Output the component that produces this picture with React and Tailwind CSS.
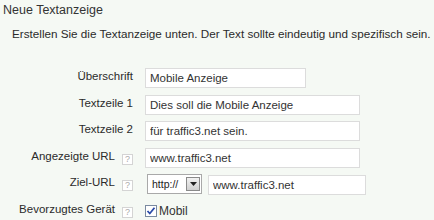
import React from 'react';

const font = { fontFamily: '"Liberation Sans", Arial, sans-serif' };

const Help = () => (
  <span className="inline-flex h-[11px] w-[11px] items-center justify-center border border-[#d4d4d4] bg-white text-[9px] leading-none text-[#aaa]">
    ?
  </span>
);

const Label = ({ children, help }) => (
  <div className="flex h-[20px] items-start justify-end gap-[7px] whitespace-nowrap text-[11.5px] leading-[16px] text-[#2b2b2b]">
    <span>{children}</span>
    {help && (
      <span className="mt-[2px]">
        <Help />
      </span>
    )}
  </div>
);

const TextInput = ({ value, w }) => (
  <input
    readOnly
    value={value}
    className={`h-[20px] ${w} border border-[#dcdcdc] bg-white px-[4px] text-[11.5px] text-[#333] outline-none`}
    style={font}
  />
);

export default function App() {
  return (
    <div className="h-[220px] w-[434px] overflow-hidden bg-[#f5f9f4] text-[#333]" style={font}>
      <div className="pl-[3px] pt-[2px] text-[12.5px] leading-[16px] text-[#333]">Neue Textanzeige</div>
      <div className="whitespace-nowrap pl-[12px] pt-[9px] text-[11.7px] leading-[14px] text-[#2b2b2b]">
        Erstellen Sie die Textanzeige unten. Der Text sollte eindeutig und spezifisch sein.
      </div>

      <div className="mt-[27px] grid grid-cols-[133px_1fr] gap-x-[12px] gap-y-[6.5px]">
        <Label>Überschrift</Label>
        <TextInput value="Mobile Anzeige" w="w-[161px]" />

        <Label>Textzeile 1</Label>
        <TextInput value="Dies soll die Mobile Anzeige" w="w-[215px]" />

        <Label>Textzeile 2</Label>
        <TextInput value="für traffic3.net sein." w="w-[215px]" />

        <Label help>Angezeigte URL</Label>
        <TextInput value="www.traffic3.net" w="w-[215px]" />

        <Label help>Ziel-URL</Label>
        <div className="flex h-[20px] items-center">
          <div className="ml-[2px] flex h-[20px] w-[55px] items-center border border-[#a9a9a9] bg-white">
            <span className="flex-1 pl-[4px] text-[10.5px] leading-none text-[#222]">http://</span>
            <span className="mr-[1px] flex h-[14px] w-[14px] items-center justify-center border border-[#8a8a8a] bg-gradient-to-b from-[#f2f2f2] to-[#d0d0d0]">
              <svg width="7" height="4" viewBox="0 0 7 4">
                <path d="M0 0h7L3.5 4z" fill="#222" />
              </svg>
            </span>
          </div>
          <div className="ml-[6px]">
            <TextInput value="www.traffic3.net" w="w-[158px]" />
          </div>
        </div>

        <Label help>Bevorzugtes Gerät</Label>
        <div className="flex h-[20px] items-center gap-[2px]">
          <span className="flex h-[12px] w-[12px] items-center justify-center border border-[#7a8aa0] bg-white">
            <svg width="10" height="10" viewBox="0 0 10 10">
              <path d="M1.5 5l2.3 2.5L8.5 1.8" fill="none" stroke="#2a4aa8" strokeWidth="1.8" />
            </svg>
          </span>
          <span className="text-[12px] leading-none text-[#333]">Mobil</span>
        </div>
      </div>
    </div>
  );
}
